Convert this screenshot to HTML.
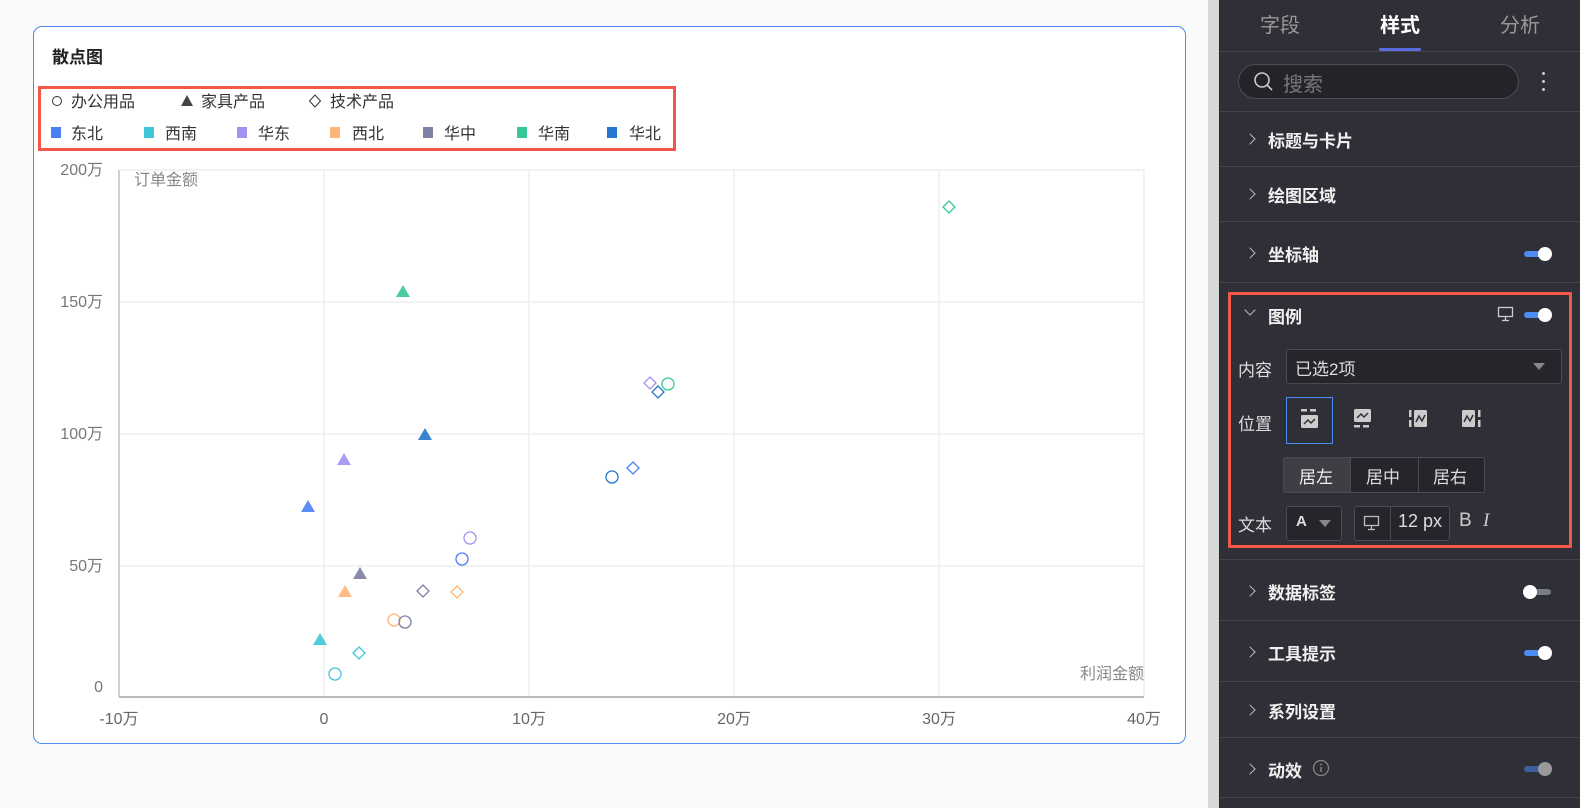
<!DOCTYPE html>
<html><head><meta charset="utf-8"><style>
*{margin:0;padding:0;box-sizing:border-box}
body{width:1580px;height:808px;background:#f9f9f9;position:relative;overflow:hidden;font-family:"Liberation Sans","Noto Sans CJK SC",sans-serif}
.a{position:absolute;white-space:nowrap}
.card{position:absolute;left:33px;top:26px;width:1153px;height:718px;border:1.5px solid #4d8bf5;border-radius:9px;background:#fff}
.strip{position:absolute;left:1208px;top:0;width:11px;height:808px;background:#d8d8d8}
.panel{position:absolute;left:1219px;top:0;width:361px;height:808px;background:#2f3037;border-left:1px solid #25262b}
.sep{position:absolute;left:1220px;width:360px;height:1px;background:#44454c}
.row{position:absolute;left:1268px;font-size:17px;font-weight:bold;color:#f0f0f0}
.chev{position:absolute;left:1246px;width:8px;height:8px;border-right:1.5px solid #bbb;border-top:1.5px solid #bbb;transform:rotate(45deg)}
.tog{position:absolute;left:1524px;width:27px;height:6px;border-radius:3px;background:#4d8bf5}
.tog::after{content:"";position:absolute;right:-1px;top:-4px;width:14px;height:14px;border-radius:7px;background:#fff}
.lbl{position:absolute;left:1238px;font-size:17px;color:#ddd}
.box{position:absolute;border:1px solid #4a4b52;border-radius:3px;background:#25262b}
</style></head><body>
<div class="card"></div>
<div class="a" style="left:52px;top:43px;font-size:17px;font-weight:bold;color:#222">散点图</div>
<div class="a" style="left:38px;top:86px;width:638px;height:65px;border:3px solid #f4574a"></div>
<svg class="a" style="left:0;top:0" width="1200" height="808" font-family="Liberation Sans, Noto Sans CJK SC, sans-serif">
<g font-size="16" fill="#333">
<circle cx="57" cy="101" r="4.5" fill="none" stroke="#333" stroke-width="1"/><text x="71" y="107">办公用品</text>
<polygon points="187,95 193,106 181,106" fill="#444"/><text x="201" y="107">家具产品</text>
<polygon points="315,95 320.5,101 315,107 309.5,101" fill="none" stroke="#333"/><text x="330" y="107">技术产品</text>
<rect x="51" y="127" width="10" height="11" fill="#4a7ff6"/><text x="71" y="139">东北</text>
<rect x="144" y="127" width="10" height="11" fill="#3ec6d8"/><text x="165" y="139">西南</text>
<rect x="237" y="127" width="10" height="11" fill="#a193f2"/><text x="258" y="139">华东</text>
<rect x="330" y="127" width="10" height="11" fill="#ffb578"/><text x="352" y="139">西北</text>
<rect x="423" y="127" width="10" height="11" fill="#7f7fa6"/><text x="444" y="139">华中</text>
<rect x="517" y="127" width="10" height="11" fill="#35c894"/><text x="538" y="139">华南</text>
<rect x="607" y="127" width="10" height="11" fill="#2477cc"/><text x="629" y="139">华北</text>
</g>
<g stroke="#eeeeee" stroke-width="1.5">
<line x1="120" y1="170" x2="1144" y2="170"/><line x1="120" y1="302" x2="1144" y2="302"/><line x1="120" y1="434" x2="1144" y2="434"/><line x1="120" y1="566" x2="1144" y2="566"/>
<line x1="324" y1="170" x2="324" y2="697"/><line x1="529" y1="170" x2="529" y2="697"/><line x1="734" y1="170" x2="734" y2="697"/><line x1="939" y1="170" x2="939" y2="697"/><line x1="1144" y1="170" x2="1144" y2="697"/>
</g>
<line x1="119" y1="170" x2="119" y2="697" stroke="#c0c0c0" stroke-width="1.5"/>
<line x1="119" y1="697" x2="1144" y2="697" stroke="#bbb" stroke-width="2"/>
<g font-size="16" fill="#777" text-anchor="end">
<text x="103" y="175">200万</text><text x="103" y="307">150万</text><text x="103" y="439">100万</text><text x="103" y="571">50万</text><text x="103" y="692">0</text>
</g>
<g font-size="16" fill="#666" text-anchor="middle">
<text x="119" y="724">-10万</text><text x="324" y="724">0</text><text x="529" y="724">10万</text><text x="734" y="724">20万</text><text x="939" y="724">30万</text><text x="1144" y="724">40万</text>
</g>
<text x="134" y="185" font-size="16" fill="#888">订单金额</text>
<text x="1144" y="679" font-size="16" fill="#888" text-anchor="end">利润金额</text>
<g stroke-width="1.3" fill="none">
<circle cx="470" cy="538" r="6" stroke="#a193f2"/>
<circle cx="462" cy="559" r="6" stroke="#4a7ff6"/>
<circle cx="394" cy="620" r="6" stroke="#ffb578"/>
<circle cx="405" cy="622" r="6" stroke="#7f7fa6"/>
<circle cx="668" cy="384" r="6" stroke="#35c894"/>
<circle cx="612" cy="477" r="6" stroke="#2477cc"/>
<circle cx="335" cy="674" r="6" stroke="#3ec6d8"/>
<polygon points="423,585 429,591 423,597 417,591" stroke="#7f7fa6"/>
<polygon points="457,586 463,592 457,598 451,592" stroke="#ffb578"/>
<polygon points="650,377 656,383 650,389 644,383" stroke="#a193f2"/>
<polygon points="658,386 664,392 658,398 652,392" stroke="#2477cc"/>
<polygon points="633,462 639,468 633,474 627,468" stroke="#4a7ff6"/>
<polygon points="359,647 365,653 359,659 353,653" stroke="#3ec6d8"/>
<polygon points="949,201 955,207 949,213 943,207" stroke="#35c894"/>
</g>
<g opacity="0.9">
<polygon points="403,285 410,297 396,297" fill="#35c894"/>
<polygon points="425,428 432,440 418,440" fill="#2477cc"/>
<polygon points="344,453 351,465 337,465" fill="#a193f2"/>
<polygon points="308,500 315,512 301,512" fill="#4a7ff6"/>
<polygon points="360,567 367,579 353,579" fill="#7f7fa6"/>
<polygon points="345,585 352,597 338,597" fill="#ffb578"/>
<polygon points="320,633 327,645 313,645" fill="#3ec6d8"/>
</g>
</svg>
<div class="strip"></div>
<div class="panel"></div>
<div class="a" style="left:1260px;top:9px;font-size:20px;color:#999">字段</div>
<div class="a" style="left:1380px;top:9px;font-size:20px;color:#fff;font-weight:bold">样式</div>
<div class="a" style="left:1500px;top:9px;font-size:20px;color:#999">分析</div>
<div class="a" style="left:1379px;top:48px;width:42px;height:3px;border-radius:2px;background:#5b6be0"></div>
<div class="sep" style="top:51px"></div>
<div class="a" style="left:1238px;top:64px;width:281px;height:35px;border:1px solid #4c4d54;border-radius:18px;background:#232429"></div>
<svg class="a" style="left:1253px;top:71px" width="22" height="22"><circle cx="9" cy="9" r="7" fill="none" stroke="#ccc" stroke-width="1.6"/><line x1="14" y1="14" x2="19" y2="19" stroke="#ccc" stroke-width="1.6"/></svg>
<div class="a" style="left:1283px;top:68px;font-size:20px;color:#777">搜索</div>
<div class="a" style="left:1542px;top:72px;width:3px;height:3px;background:#ccc;border-radius:2px;box-shadow:0 8px 0 #ccc,0 16px 0 #ccc"></div>
<div class="sep" style="top:111px"></div>
<div class="chev" style="top:135px"></div><div class="row" style="top:127px">标题与卡片</div>
<div class="sep" style="top:166px"></div>
<div class="chev" style="top:190px"></div><div class="row" style="top:182px">绘图区域</div>
<div class="sep" style="top:221px"></div>
<div class="chev" style="top:249px"></div><div class="row" style="top:241px">坐标轴</div>
<div class="tog" style="top:251px"></div>
<div class="sep" style="top:282px"></div>
<div class="a" style="left:1228px;top:292px;width:344px;height:256px;border:3px solid #f4574a"></div>
<div class="a" style="left:1246px;top:306px;width:8px;height:8px;border-right:1.5px solid #bbb;border-bottom:1.5px solid #bbb;transform:rotate(45deg)"></div>
<div class="row" style="top:303px">图例</div>
<svg class="a" style="left:1497px;top:306px" width="18" height="16"><rect x="1.5" y="1.5" width="14" height="9" fill="none" stroke="#ccc" stroke-width="1.3"/><line x1="8.5" y1="11" x2="8.5" y2="14" stroke="#ccc" stroke-width="1.3"/><line x1="5" y1="14.5" x2="12" y2="14.5" stroke="#ccc" stroke-width="1.3"/></svg>
<div class="tog" style="top:312px"></div>
<div class="lbl" style="top:356px">内容</div>
<div class="box" style="left:1286px;top:349px;width:276px;height:35px"></div>
<div class="a" style="left:1295px;top:355px;font-size:17px;color:#ddd">已选2项</div>
<div class="a" style="left:1533px;top:363px;border-left:6px solid transparent;border-right:6px solid transparent;border-top:7px solid #888"></div>
<div class="lbl" style="top:410px">位置</div>
<div class="a" style="left:1286px;top:397px;width:47px;height:47px;border:1.5px solid #4d8bf5"></div>
<svg class="a" style="left:1300px;top:409px" width="190" height="22">
<g fill="#ccc"><rect x="1" y="0" width="6" height="2.5"/><rect x="10" y="0" width="6" height="2.5"/><rect x="1" y="6" width="17" height="13" rx="1.5"/>
<rect x="54" y="0" width="17" height="13" rx="1.5"/><rect x="54" y="16" width="6" height="2.5"/><rect x="63" y="16" width="6" height="2.5"/>
<rect x="109" y="1" width="2.5" height="7"/><rect x="109" y="11" width="2.5" height="7"/><rect x="114" y="1" width="13" height="17" rx="1.5"/>
<rect x="162" y="1" width="13" height="17" rx="1.5"/><rect x="178" y="1" width="2.5" height="7"/><rect x="178" y="11" width="2.5" height="7"/></g>
<g fill="none" stroke="#2f3037" stroke-width="1.5"><polyline points="4,15 8,11 11,14 15,10"/><polyline points="57,9 61,5 64,8 68,4"/><polyline points="116,13 119,7 122,12 125,6"/><polyline points="164,13 167,7 170,12 173,6"/></g>
</svg>
<div class="a" style="left:1283px;top:457px;width:202px;height:36px;border:1px solid #4a4b52;border-radius:3px;background:#25262b"></div>
<div class="a" style="left:1283px;top:457px;width:68px;height:36px;border:1px solid #4a4b52;border-radius:3px 0 0 3px;background:#3e3f45"></div>
<div class="a" style="left:1418px;top:458px;width:1px;height:34px;background:#4a4b52"></div>
<div class="a" style="left:1299px;top:463px;font-size:17px;color:#eee">居左</div>
<div class="a" style="left:1366px;top:463px;font-size:17px;color:#ddd">居中</div>
<div class="a" style="left:1433px;top:463px;font-size:17px;color:#ddd">居右</div>
<div class="lbl" style="top:511px">文本</div>
<div class="box" style="left:1286px;top:506px;width:56px;height:35px"></div>
<div class="a" style="left:1296px;top:513px;font-size:15px;font-weight:bold;color:#ddd">A</div>
<div class="a" style="left:1319px;top:520px;border-left:6px solid transparent;border-right:6px solid transparent;border-top:7px solid #888"></div>
<div class="box" style="left:1354px;top:506px;width:96px;height:35px"></div>
<div class="a" style="left:1390px;top:507px;width:1px;height:33px;background:#4a4b52"></div>
<svg class="a" style="left:1363px;top:515px" width="18" height="16"><rect x="1.5" y="1.5" width="14" height="9" fill="none" stroke="#bbb" stroke-width="1.3"/><line x1="8.5" y1="11" x2="8.5" y2="14" stroke="#bbb" stroke-width="1.3"/><line x1="5" y1="14.5" x2="12" y2="14.5" stroke="#bbb" stroke-width="1.3"/></svg>
<div class="a" style="left:1398px;top:511px;font-size:18px;color:#ddd">12 px</div>
<div class="a" style="left:1459px;top:510px;font-size:19px;color:#ccc">B</div>
<div class="a" style="left:1483px;top:510px;font-size:19px;color:#ccc;font-style:italic;font-family:'Liberation Serif',serif">I</div>
<div class="sep" style="top:559px"></div>
<div class="chev" style="top:587px"></div><div class="row" style="top:579px">数据标签</div>
<div class="a" style="left:1524px;top:589px;width:27px;height:6px;border-radius:3px;background:#7a7c86"></div>
<div class="a" style="left:1523px;top:585px;width:14px;height:14px;border-radius:7px;background:#fff"></div>
<div class="sep" style="top:620px"></div>
<div class="chev" style="top:648px"></div><div class="row" style="top:640px">工具提示</div>
<div class="tog" style="top:650px"></div>
<div class="sep" style="top:681px"></div>
<div class="chev" style="top:706px"></div><div class="row" style="top:698px">系列设置</div>
<div class="sep" style="top:737px"></div>
<div class="chev" style="top:765px"></div><div class="row" style="top:757px">动效</div>
<svg class="a" style="left:1312px;top:759px" width="18" height="18"><circle cx="9" cy="9" r="7.5" fill="none" stroke="#888" stroke-width="1.2"/><line x1="9" y1="8" x2="9" y2="13" stroke="#888" stroke-width="1.4"/><circle cx="9" cy="5.5" r="0.9" fill="#888"/></svg>
<div class="a" style="left:1524px;top:766px;width:27px;height:6px;border-radius:3px;background:#3e5ea0"></div>
<div class="a" style="left:1538px;top:762px;width:14px;height:14px;border-radius:7px;background:#999"></div>
<div class="sep" style="top:797px"></div>
</body></html>
